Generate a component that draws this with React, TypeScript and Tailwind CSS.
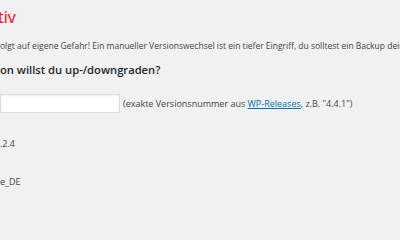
export default function App() {
  return (
    <div
      className="w-[400px] h-[240px] overflow-hidden bg-[#f1f1f1] text-[#444]"
      style={{ fontFamily: '"Open Sans", "Liberation Sans", sans-serif' }}
    >
      <div className="relative">
        <div className="pt-[5px] -ml-[2px] text-[16px] leading-[24px] text-[#f00]">tiv</div>
        <div className="mt-[11px] text-[8.5px] leading-[12px] whitespace-nowrap">
          olgt auf eigene Gefahr! Ein manueller Versionswechsel ist ein tiefer Eingriff, du solltest ein Backup deiner Seite machen.
        </div>
        <div className="mt-[10px] text-[11.2px] leading-[16px] font-semibold text-[#23282d] whitespace-nowrap">
          on willst du up-/downgraden?
        </div>
        <div className="mt-[16px] flex items-center whitespace-nowrap text-[9px]">
          <div className="w-[120px] h-[19px] bg-white border border-[#ddd] shadow-[inset_0_1px_2px_rgba(0,0,0,0.07)]" />
          <span className="ml-[3px]">
            (exakte Versionsnummer aus{" "}
            <a className="text-[#0073aa] underline">WP-Releases</a>, z.B. "4.4.1")
          </span>
        </div>
        <div className="mt-[25px] text-[9px] leading-[12px]">.2.4</div>
        <div className="mt-[26px] text-[9px] leading-[12px]">e_DE</div>
      </div>
    </div>
  );
}
